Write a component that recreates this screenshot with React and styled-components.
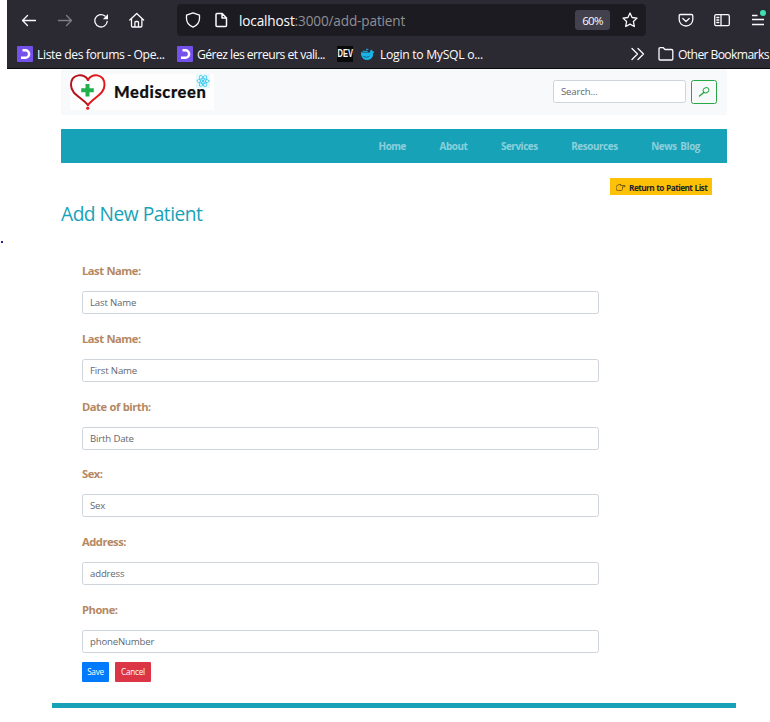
import React from "react";
import styled, { createGlobalStyle } from "styled-components";

const Global = createGlobalStyle`
  * { box-sizing: border-box; }
  body { margin: 0; background: #fff; font-family: "Open Sans", "Noto Sans", sans-serif; overflow: hidden; }
`;

const Page = styled.div`
  width: 770px;
  height: 722px;
  display: flex;
  flex-direction: column;
  position: relative;
  overflow: hidden;
`;

/* Browser chrome */
const Chrome = styled.header`
  margin-left: 7px;
  height: 69px;
  flex: none;
  background: #2b2a33;
  border-bottom: 1px solid #0c0c0d;
  color: #fbfbfe;
  overflow: hidden;
`;
const Toolbar = styled.div`
  display: flex;
  align-items: center;
  height: 40px;
  padding-left: 14px;
`;
const Glyph = styled.svg`
  flex: none;
  display: block;
  width: ${(p) => p.$w || 16}px;
  height: ${(p) => p.$h || 16}px;
  margin-left: ${(p) => p.$ml || 0}px;
  opacity: ${(p) => (p.$dim ? 0.4 : 1)};
  fill: none;
  stroke: #fbfbfe;
  stroke-width: 1.3;
  stroke-linecap: round;
  stroke-linejoin: round;
`;
const UrlBar = styled.div`
  display: flex;
  align-items: center;
  flex: none;
  width: 469px;
  height: 32px;
  margin-left: 32px;
  padding-left: 8px;
  border-radius: 4px;
  background: #1c1b22;
`;
const Url = styled.span`
  width: 336px;
  margin-left: 10px;
  padding-top: 2px;
  font-size: 13.6px;
  line-height: 20px;
  letter-spacing: -0.15px;
  white-space: nowrap;
  color: #8f8f96;
`;
const Host = styled.span`
  color: #fbfbfe;
`;
const Zoom = styled.span`
  width: 35px;
  height: 20px;
  border-radius: 3px;
  background: #42414d;
  font-size: 11.5px;
  line-height: 22px;
  letter-spacing: -0.7px;
  text-align: center;
`;
const Bookmarks = styled.div`
  display: flex;
  align-items: center;
  height: 28px;
  padding-left: 10px;
`;
const BookmarkText = styled.span`
  flex: none;
  width: ${(p) => p.$w}px;
  margin-left: 4px;
  padding-top: 2px;
  font-size: 12.2px;
  line-height: 18px;
  letter-spacing: ${(p) => p.$ls || -0.4}px;
  white-space: nowrap;
`;
const Dev = styled.span`
  flex: none;
  width: 16px;
  height: 16px;
  margin-left: 11px;
  background: #0a0a0a;
  display: flex;
  justify-content: center;
  font: bold 10px/16px "Liberation Sans Narrow", "Liberation Sans", sans-serif;
`;
const DevText = styled.span`
  flex: none;
  transform: scaleX(0.75);
`;

/* Site */
const Site = styled.main`
  width: 666px;
  margin-left: 61px;
  display: flex;
  flex-direction: column;
`;
const Masthead = styled.div`
  display: flex;
  height: 46px;
  padding: 5px 10px 0 9px;
  justify-content: space-between;
  background: #f8f9fa;
`;
const Brand = styled.div`
  display: flex;
  width: 144px;
  height: 36px;
  background: #fefefe;
`;
const BrandName = styled.span`
  width: 83px;
  margin-left: 8px;
  font: 900 16.5px/36px Lato, sans-serif;
  color: #111;
  letter-spacing: 0.6px;
  -webkit-text-stroke: 0.2px #111;
`;
const Search = styled.div`
  display: flex;
  gap: 5px;
  padding-top: 6px;
`;
const Field = styled.input`
  display: block;
  width: ${(p) => p.$w}px;
  height: 23px;
  padding: 0 7px;
  border: 1px solid #ced4da;
  border-radius: 2.5px;
  background: #fff;
  font-family: "Open Sans", sans-serif;
  font-size: 9.6px;
  outline: none;
  letter-spacing: -0.16px;
  &::placeholder { color: #5f6870; opacity: 1; }
`;
const SearchButton = styled.button`
  display: flex;
  align-items: center;
  justify-content: center;
  width: 26px;
  height: 24px;
  padding: 0;
  border: 1px solid #28a745;
  border-radius: 2.5px;
  background: transparent;
`;
const Nav = styled.nav`
  display: flex;
  justify-content: flex-end;
  gap: 33.5px;
  height: 34px;
  margin-top: 14px;
  padding-right: 27px;
  background: #17a2b8;
`;
const NavLink = styled.a`
  font-size: 9.9px;
  font-weight: 700;
  line-height: 35px;
  letter-spacing: -0.42px;
  word-spacing: 1.5px;
  color: rgba(255, 255, 255, 0.5);
  white-space: nowrap;
`;
const ReturnButton = styled.button`
  display: flex;
  align-items: center;
  align-self: flex-end;
  width: 102px;
  height: 17px;
  margin: 15px 15px 0 0;
  padding: 1px 0 0 6px;
  border: 0;
  background: #ffc107;
  color: #212529;
  font: 700 8.3px/17px "Open Sans", sans-serif;
  letter-spacing: -0.58px;
  word-spacing: 0.6px;
  white-space: nowrap;
  gap: 3px;
`;
const Title = styled.h1`
  margin: 4px 0 0;
  font-size: 19.2px;
  font-weight: 400;
  line-height: 30px;
  letter-spacing: -0.5px;
  color: #17a2b8;
`;
const Form = styled.form`
  display: flex;
  flex-direction: column;
  width: 517px;
  margin: 32px 0 0 21px;
`;
const Group = styled.label`
  display: block;
  height: 67.8px;
`;
const Label = styled.span`
  display: block;
  height: 30px;
  font-size: 11.2px;
  font-weight: 700;
  line-height: 20px;
  letter-spacing: -0.5px;
  word-spacing: 0.6px;
  color: #b58863;
`;
const Actions = styled.div`
  display: flex;
  gap: 6px;
  margin-top: -5.8px;
`;
const Button = styled.button`
  width: ${(p) => p.$w}px;
  height: 20px;
  padding: 0;
  border: 0;
  border-radius: 1px;
  background: ${(p) => p.$bg};
  color: #fff;
  font: 8.2px/20px "Open Sans", sans-serif;
  letter-spacing: -0.25px;
`;
const Footer = styled.footer`
  width: 684px;
  height: 5px;
  margin: 21px 0 0 52px;
  background: #17a2b8;
`;
const Dot = styled.span`
  position: absolute;
  left: 1px;
  top: 241px;
  width: 1.5px;
  height: 1.5px;
  background: #23238e;
`;

const ClassroomIcon = ({ ml }) => (
  <Glyph viewBox="0 0 16 16" $ml={ml}>
    <rect width="16" height="16" rx="1" fill="#7451eb" stroke="none" />
    <path d="M5.500 4.200h2.800a3.800 3.800 0 0 1 0 7.600H4" strokeWidth="2.500" strokeLinecap="butt" stroke="#fff" />
  </Glyph>
);

const fields = [
  ["Last Name:", "Last Name"],
  ["Last Name:", "First Name"],
  ["Date of birth:", "Birth Date"],
  ["Sex:", "Sex"],
  ["Address:", "address"],
  ["Phone:", "phoneNumber"],
];

export default function App() {
  return (
    <Page>
      <Global />
      <Chrome>
        <Toolbar>
          <Glyph viewBox="0 0 16 16"><path d="M14.5 8.500H1.500M6.500 3.500l-5 5 5 5" /></Glyph>
          <Glyph viewBox="0 0 16 16" $ml={20} $dim><path d="M1.500 8.500h13M9.500 3.500l5 5-5 5" /></Glyph>
          <Glyph viewBox="0 0 16 16" $ml={20}>
            <path d="M14.200 9.500A6.200 6.200 0 1 1 12 4" />
            <path d="M15 2v5.200H9.800z" fill="#fbfbfe" stroke="none" />
          </Glyph>
          <Glyph viewBox="0 0 16 16" $ml={20}>
            <path d="M.8 8L7.700 1.500 14.600 8M2.500 6.800v7q0 1.200 1.200 1.200h8q1.200 0 1.200-1.200v-7M5.900 15v-4.500q0-1 1-1h1.600q1 0 1 1V15" />
          </Glyph>
          <UrlBar>
            <Glyph viewBox="0 0 16 16"><path d="M8 .8L14.5 3.2v3.3q0 5.8-6.5 8.7Q1.500 12.300 1.500 6.500V3.200z" /></Glyph>
            <Glyph viewBox="0 0 16 16" $ml={12}>
              <path d="M3 2.500q0-1 1-1h5.200L13.500 6v7.500q0 1-1 1H4q-1 0-1-1zM9 1.500V6h4.300" strokeWidth="1.500" />
            </Glyph>
            <Url><Host>localhost</Host>:3000/add-patient</Url>
            <Zoom>60%</Zoom>
            <Glyph viewBox="0 0 16 16" $ml={12}>
              <path d="M8 1l2.100 4.500 4.900.6-3.600 3.400.9 5L8 12.100l-4.300 2.400.9-5L1 6.100l4.900-.6z" />
            </Glyph>
          </UrlBar>
          <Glyph viewBox="0 0 16 16" $ml={32}>
            <path d="M2.500 2.500h11q1.300 0 1.300 1.300V7.500a6.800 6.500 0 0 1-13.600 0V3.800q0-1.300 1.300-1.300zM4.800 6.500L8 9.500l3.200-3" />
          </Glyph>
          <Glyph viewBox="0 0 16 16" $ml={20}>
            <rect x=".7" y="2.700" width="14.600" height="11" rx="1.500" />
            <path d="M7 2.700v11M2.800 5.500h2M2.800 8h2M2.800 10.500h2" />
          </Glyph>
          <Glyph viewBox="0 0 20 20" $w={20} $h={20} $ml={20}>
            <path d="M2 5.500h5.500M2 9.500h12M2 14.500h12" strokeLinecap="butt" />
            <circle cx="13" cy="3" r="3" fill="#3fe1b0" stroke="none" />
          </Glyph>
        </Toolbar>
        <Bookmarks>
          <ClassroomIcon />
          <BookmarkText $w={129}>Liste des forums - Ope...</BookmarkText>
          <ClassroomIcon ml={11} />
          <BookmarkText $w={129} $ls={-0.55}>Gérez les erreurs et vali...</BookmarkText>
          <Dev><DevText>DEV</DevText></Dev>
          <Glyph viewBox="0 0 16 16" $ml={7}>
            <path d="M1.500 7h9q-.5-1.800.8-3 1 .5.900 1.500 1-.2 1.500.4-.3.900-1 1.300.3 6.300-6 6.300Q1.500 13.500 1.500 7zM3 5.300h4.500M6.500 3.300h1.500" fill="#18b4e8" stroke="#18b4e8" strokeWidth="1" />
            <path d="M3.500 10.500q3 1.800 5.500 0" stroke="#126a8a" strokeWidth="1" />
          </Glyph>
          <BookmarkText $w={246} $ls={-0.3}>Login to MySQL o...</BookmarkText>
          <Glyph viewBox="0 0 16 16" $ml={4}><path d="M2 2.500L7.500 8 2 13.500M8 2.500L13.500 8 8 13.500" /></Glyph>
          <Glyph viewBox="0 0 16 16" $ml={12}>
            <path d="M1 13V3q0-1.300 1.300-1.300h3L7 3.500h6.500q1.300 0 1.300 1.300V13q0 1-1 1H2q-1 0-1-1z" />
          </Glyph>
          <BookmarkText $w={92} $ls={-0.64}>Other Bookmarks</BookmarkText>
        </Bookmarks>
      </Chrome>
      <Site>
        <Masthead>
          <Brand>
            <Glyph viewBox="0 0 36 36" $w={36} $h={36}>
              <path d="M18 6C15-1 1-1 1 11c0 9 10 12 17 20" stroke="#b5121b" strokeWidth="2" />
              <path d="M18 6c3-7 16.500-7 16.500 5 0 9-10 12-16.500 20" stroke="#e3171b" strokeWidth="2" />
              <path d="M17.500 10v12.500M11.200 16.300h12.600" stroke="#22b14c" strokeWidth="4" strokeLinecap="butt" />
              <circle cx="17.700" cy="34.200" r="1.600" fill="#ed1c24" stroke="none" />
            </Glyph>
            <BrandName>Mediscreen</BrandName>
            <Glyph viewBox="0 0 14 14" $w={14} $h={14} $ml={-1}>
              <rect width="14" height="14" fill="#e6f8fc" stroke="none" />
              <g stroke="#3dc9ee" strokeWidth=".9">
                <ellipse cx="7" cy="7" rx="6" ry="2.300" />
                <ellipse cx="7" cy="7" rx="6" ry="2.300" transform="rotate(60 7 7)" />
                <ellipse cx="7" cy="7" rx="6" ry="2.300" transform="rotate(120 7 7)" />
              </g>
              <circle cx="7" cy="7" r="1.200" fill="#3dc9ee" stroke="none" />
            </Glyph>
          </Brand>
          <Search>
            <Field $w={133} placeholder="Search..." />
            <SearchButton>
              <Glyph viewBox="0 0 12 12" $w={12} $h={12}>
                <g stroke="#28a745"><ellipse cx="8" cy="4.300" rx="2.900" ry="2.500" strokeWidth="1" transform="rotate(-25 8 4.300)" /><path d="M5.800 6.500L1.500 10" strokeWidth="1.500" /></g>
              </Glyph>
            </SearchButton>
          </Search>
        </Masthead>
        <Nav>
          {["Home", "About", "Services", "Resources", "News Blog"].map((t) => <NavLink key={t}>{t}</NavLink>)}
        </Nav>
        <ReturnButton>
          <Glyph viewBox="0 0 10 8" $w={10} $h={8}>
            <path d="M.5 3L3 1.500h2l-.5 1H9q.8.6 0 1.300H6.500v2.700q-.3 1-1.500 1H2.500L.5 7z" stroke="#6b4d10" strokeWidth=".8" />
          </Glyph>
          Return to Patient List
        </ReturnButton>
        <Title>Add New Patient</Title>
        <Form>
          {fields.map(([label, hint]) => (
            <Group key={hint}>
              <Label>{label}</Label>
              <Field $w={517} placeholder={hint} />
            </Group>
          ))}
          <Actions>
            <Button type="button" $w={27} $bg="#007bff">Save</Button>
            <Button type="button" $w={36} $bg="#dc3545">Cancel</Button>
          </Actions>
        </Form>
      </Site>
      <Footer />
      <Dot />
    </Page>
  );
}
